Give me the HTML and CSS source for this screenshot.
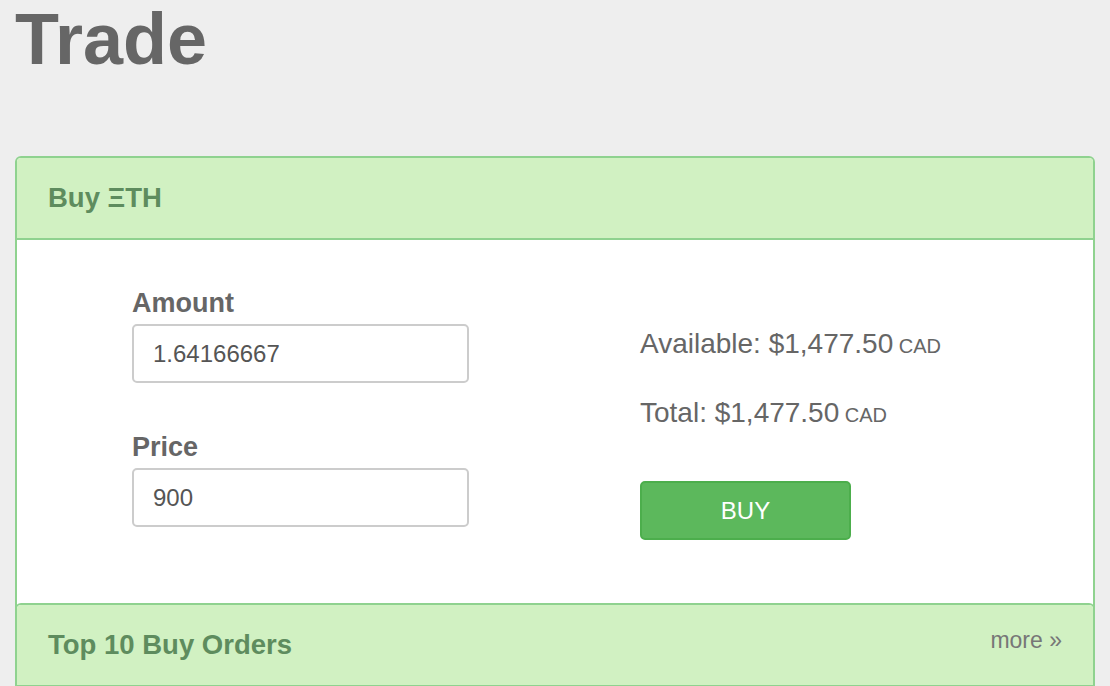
FILE: index.html
```html
<!DOCTYPE html>
<html lang="en">
<head>
    <link rel="stylesheet" href="styles.css">
</head>
<body>
    <h1 class="page-title">Trade</h1>

    <div class="panel">
        <div class="panel-heading">
            <h3 class="panel-title">Buy ΞTH</h3>
        </div>
        <div class="panel-body">
            <div class="order-form">
                <div class="form-group">
                    <label for="amountInput">Amount</label>
                    <input type="text" id="amountInput" value="1.64166667">
                </div>
                <div class="form-group">
                    <label for="priceInput">Price</label>
                    <input type="text" id="priceInput" value="900">
                </div>
            </div>
            <div class="order-summary">
                <p>Available: $1,477.50<span class="currency"> CAD</span></p>
                <p>Total: $1,477.50<span class="currency"> CAD</span></p>
                <button class="buy-btn">BUY</button>
            </div>
        </div>

        <div class="panel panel-nested">
            <div class="panel-heading">
                <h3 class="panel-title">Top 10 Buy Orders</h3>
                <a href="#" class="more-link">more &raquo;</a>
            </div>
        </div>
    </div>
</body>
</html>
```

FILE: styles.css
```css
body {
    font-family: 'Liberation Sans', Arial, sans-serif;
    background-color: #eeeeee;
    margin: 0;
    padding: 0 15px;
    color: #666;
}

.page-title {
    font-size: 72px;
    line-height: 79px;
    font-weight: bold;
    color: #666;
    margin: 0 0 77px 0;
}

.panel {
    background-color: #fff;
    border: 2px solid #8fd28f;
    border-radius: 6px;
}

.panel-nested {
    margin: 0 -2px;
    border-bottom: none;
    border-radius: 6px 6px 0 0;
}

.panel-heading {
    display: flex;
    justify-content: space-between;
    align-items: flex-start;
    background-color: #d1f1c2;
    border-bottom: 2px solid #8fd28f;
    border-radius: 4px 4px 0 0;
    padding: 25px 31px;
}

.panel-title {
    margin: 0;
    font-size: 27.5px;
    line-height: 30px;
    font-weight: bold;
    color: #5e8c5e;
}

.more-link {
    color: #777;
    font-size: 23px;
    line-height: 20px;
    text-decoration: none;
}

.panel-body {
    display: flex;
    align-items: flex-start;
    padding: 48px 0 63px 115px;
}

.order-form {
    width: 337px;
}

.form-group + .form-group {
    margin-top: 49px;
}

.form-group label {
    display: block;
    font-size: 27px;
    line-height: 30px;
    font-weight: bold;
    color: #666;
    margin-bottom: 6px;
}

.form-group input {
    display: block;
    box-sizing: border-box;
    width: 100%;
    height: 59px;
    padding: 0 19px;
    border: 2px solid #cccccc;
    border-radius: 5px;
    font-family: inherit;
    font-size: 24px;
    color: #555;
    background-color: #fff;
}

.order-summary {
    margin-left: 171px;
    padding-top: 40px;
}

.order-summary p {
    margin: 0 0 35px 0;
    font-size: 28px;
    line-height: 32px;
    color: #666;
}

.currency {
    font-size: 20px;
}

.buy-btn {
    display: block;
    margin-top: 50px;
    width: 211px;
    height: 59px;
    background-color: #5cb85c;
    border: 2px solid #4cae4c;
    border-radius: 5px;
    color: #fff;
    font-family: inherit;
    font-size: 24px;
    cursor: pointer;
}
```
